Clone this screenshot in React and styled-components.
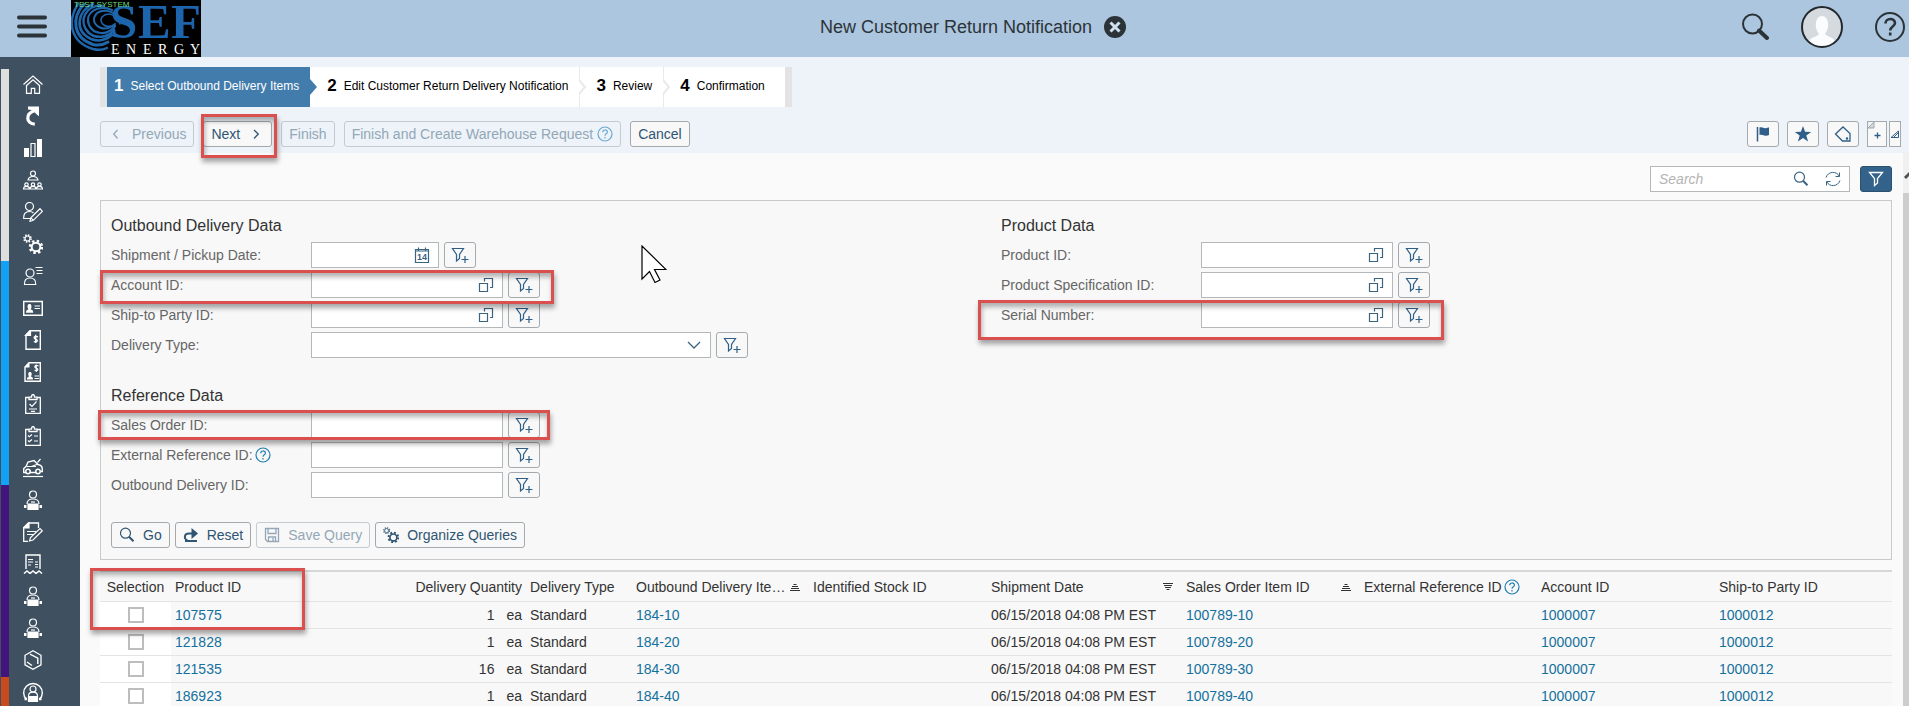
import React, { useState } from "react";
import styled, { createGlobalStyle, css } from "styled-components";

const GlobalStyle = createGlobalStyle`
  * {
    box-sizing: border-box;
  }

  body {
    margin: 0;
    overflow: hidden;
    background: #fafafa;
    color: #333;
    font: 14px/20px "Liberation Sans", Arial, sans-serif;
  }

  button,
  input,
  select {
    font: inherit;
  }

  svg {
    display: block;
    flex-shrink: 0;
  }
`;

const Page = styled.div`
  display: flex;
  flex-direction: column;
  height: 100vh;
  overflow: hidden;
`;

const Header = styled.header`
  display: flex;
  align-items: center;
  flex-shrink: 0;
  height: 57px;
  padding: 0 4px 0 17px;
  background: #abc6de;
  color: #2c3338;
`;

const PlainButton = styled.button`
  display: flex;
  align-items: center;
  justify-content: center;
  flex-shrink: 0;
  padding: 0;
  border: 0;
  background: none;
  color: inherit;
`;

const LogoLink = styled.a`
  display: block;
  margin-left: 24px;
`;

const TitleBar = styled.div`
  display: flex;
  flex: 1;
  align-items: center;
  justify-content: center;
  gap: 12px;
  padding: 0 0 4px 4px;
`;

const Title = styled.h1`
  margin: 0;
  font-size: 18px;
  font-weight: normal;
  line-height: 22px;
`;

const HeaderActions = styled.div`
  display: flex;
  align-items: center;
  gap: 32px;
  padding-bottom: 4px;
`;

const Body = styled.div`
  display: flex;
  flex: 1;
  min-height: 0;
`;

const Sidebar = styled.nav`
  flex-shrink: 0;
  width: 80px;
  padding: 12px 0 0 1px;
  overflow: hidden;
  background: #3f5161;
`;

const SideGroup = styled.div`
  border-left: 8px solid ${(props) => props.$color};
`;

const SideLink = styled.a`
  display: flex;
  align-items: center;
  height: 32px;
  padding: 0 0 2px 14px;
  color: #fff;
`;

const Content = styled.main`
  display: flex;
  flex: 1;
  flex-direction: column;
  min-width: 0;
`;

const Band = styled.div`
  display: flex;
  flex-direction: column;
  flex-shrink: 0;
  gap: 14px;
  padding: 10px 8px 6px 20px;
  background: #edf3f8;
`;

const Steps = styled.ol`
  display: flex;
  align-self: flex-start;
  margin: 0;
  padding: 0;
  border: solid #e3e3e3;
  border-width: 0 7px;
  list-style: none;
  background: #fff;
`;

const Step = styled.li`
  display: flex;
  position: relative;
  align-items: center;
  gap: 7px;
  height: 40px;
  padding: 0 11px 2px 17px;
  color: #000;
  font-size: 12px;

  b {
    font-size: 17px;
  }

  &:first-child {
    padding-left: 7px;
  }

  &:last-child {
    padding-right: 20px;
  }

  ${(props) =>
    props.$active &&
    css`
      background: #427cac;
      color: #fff;
    `}
`;

const StepArrow = styled.svg`
  position: absolute;
  z-index: 1;
  top: 0;
  left: 100%;
`;

const Bar = styled.div`
  display: flex;
  align-items: center;
  justify-content: space-between;
`;

const Group = styled.div`
  display: flex;
  gap: ${(props) => props.$gap}px;
`;

const Anchor = styled.div`
  display: flex;
  position: relative;
`;

const Button = styled.button`
  display: flex;
  align-items: center;
  gap: ${(props) => props.$gap ?? 8}px;
  height: 26px;
  padding: 0 7px;
  border: 1px solid #a3a9ad;
  border-radius: 3px;
  background: #f8f8f8;
  color: #2f5573;
  white-space: nowrap;

  &:disabled {
    border-color: #c3cad0;
    background: transparent;
    color: #93a7b7;
  }
`;

const IconButton = styled(Button)`
  flex-shrink: 0;
  justify-content: center;
  width: 32px;
  padding: 0;
  background: ${(props) => (props.$filled ? "#33628a" : "#f8f8f8")};
  color: ${(props) => (props.$filled ? "#fff" : "#2f5f88")};
  border-color: ${(props) => (props.$filled ? "#2c5170" : "#a3a9ad")};
`;

const PageButton = styled(IconButton)`
  width: ${(props) => props.$width}px;
  border-radius: 0;
`;

const Callout = styled.span`
  position: absolute;
  z-index: 2;
  inset: ${(props) => props.$inset};
  border: 3px solid #d9504f;
  box-shadow:
    1px 4px 5px rgba(0, 0, 0, 0.35),
    inset 1px 4px 5px rgba(0, 0, 0, 0.3);
  pointer-events: none;
`;

const SelectionCallout = styled(Callout)`
  width: 215px;
  height: 62px;
`;

const Scroller = styled.div`
  display: flex;
  flex: 1;
  min-height: 0;
`;

const ScrollBody = styled.div`
  flex: 1;
  min-width: 0;
  padding: 13px 11px 0 20px;
`;

const ScrollTrack = styled.div`
  flex-shrink: 0;
  width: 6px;
  overflow: hidden;
  background: #f0f0f0;
`;

const ScrollThumb = styled.div`
  height: 100%;
  background: #cdcdcd;
`;

const SearchRow = styled.div`
  display: flex;
  justify-content: flex-end;
  gap: 10px;
  margin-bottom: 8px;
`;

const InputBox = styled.div`
  display: flex;
  align-items: center;
  gap: ${(props) => props.$gap ?? 0}px;
  width: ${(props) => props.$width}px;
  height: 26px;
  padding-right: 8px;
  border: 1px solid #b5b8ba;
  background: #fff;
  color: #3b6481;

  input,
  select {
    flex: 1;
    min-width: 0;
    height: 24px;
    padding: 0 8px;
    border: 0;
    outline: 0;
    background: none;
    appearance: none;
  }

  input::placeholder {
    color: #b4b4b4;
    font-style: italic;
  }
`;

const Panel = styled.form`
  position: relative;
  padding: 15px 10px 11px;
  border: 1px solid #c8cacb;
  background: #f8f8f8;
`;

const Columns = styled.div`
  display: grid;
  grid-template-columns: 1fr 1fr;
  gap: 10px;
`;

const FieldGroup = styled.section`
  display: flex;
  flex-direction: column;
  gap: 4px;

  & + & {
    margin-top: 28px;
  }
`;

const GroupTitle = styled.h2`
  margin: 0 0 2px;
  font-size: 16px;
  font-weight: normal;
  line-height: 20px;
`;

const FieldRow = styled.div`
  display: flex;
  position: relative;
  align-self: flex-start;
  align-items: center;
  gap: 5px;
`;

const FieldLabel = styled.div`
  display: flex;
  align-items: center;
  gap: 2px;
  width: 195px;
  color: #666;
`;

const PanelFooter = styled.div`
  display: flex;
  gap: 5px;
  margin-top: 24px;
`;

const Pointer = styled.svg`
  position: absolute;
  top: 44px;
  left: 540px;
`;

const TableWrap = styled.div`
  position: relative;
  margin-top: 10px;
`;

const Table = styled.table`
  width: 100%;
  border-top: 2px solid #d6d8d8;
  border-spacing: 0;
  table-layout: fixed;
  background: #f8f8f8;

  th,
  td {
    height: 27px;
    padding: 0 4px;
    border-bottom: 1px solid #e4e4e4;
    font-weight: normal;
    text-align: left;
    white-space: nowrap;
  }

  th {
    height: 30px;
  }
`;

const HeadCell = styled.div`
  display: flex;
  align-items: center;
  justify-content: ${(props) =>
    props.$align === "right"
      ? "flex-end"
      : props.$align === "center"
        ? "center"
        : "flex-start"};
  gap: 2px;

  span {
    overflow: hidden;
    text-overflow: ellipsis;
  }
`;

const SortMark = styled.svg`
  margin: 0 5px 0 auto;
`;

const CheckCell = styled.td`
  background: #fff;
`;

const CheckBox = styled.input`
  display: block;
  width: 16px;
  height: 16px;
  margin: 0 auto;
  border: 2px solid #bdbdbd;
  background: #fff;
  appearance: none;

  &:checked {
    background: #427cac;
  }
`;

const QuantityCell = styled.td`
  && {
    text-align: right;
  }
`;

const Unit = styled.span`
  margin-left: 12px;
`;

const Link = styled.a`
  color: #14709c;
  text-decoration: none;
`;

const Icon = ({ size = 16, box = 16, width = 1, children, ...rest }) => (
  <svg
    width={size}
    height={size}
    viewBox={`0 0 ${box} ${box}`}
    fill="none"
    stroke="currentColor"
    strokeWidth={width}
    aria-hidden="true"
    {...rest}
  >
    {children}
  </svg>
);

const worker = (
  <>
    <circle cx="10" cy="4.5" r="3.5" />
    <path d="M4 14c0-3.500 2.500-5 6-5s6 1.500 6 5" />
    <path d="M8 12h4" />
    <path d="M5 14h10v5.500H5z" fill="currentColor" />
    <path d="M1 16.500h2.500M16.500 16.500H19" strokeWidth="3" />
  </>
);

const sideIcons = {
  home: (
    <>
      <path d="M.5 10.500 10 2l9.500 8.500M3 12l7-6.300L17 12" />
      <path d="M3.500 12v7.300h4.800v-5h3.400v5h4.800V12" />
    </>
  ),
  curve: (
    <>
      <path d="M12.500 4.500C7 6 4.500 9 4.800 12.500c.2 3 2.700 5.500 7 5.700" strokeWidth="3.200" />
      <path d="M5 .5h11v9.800l-2.500-2-3.700-4L5 3.500z" fill="currentColor" stroke="none" />
    </>
  ),
  bars: (
    <>
      <path d="M1 10h5v9H1zM14 1h5v18h-5z" fill="currentColor" stroke="none" />
      <path d="M8 5.500h4v13H8z" />
    </>
  ),
  team: (
    <>
      <circle cx="10" cy="3.500" r="2.500" />
      <path d="M5 10c.5-2.500 2-3.500 5-3.500s4.500 1 5 3.500zM.5 19c0-2 1-2.700 2.800-2.700S6.500 17 6.500 19zM7 19c0-2 1-2.700 3-2.700s3 .7 3 2.700zM13.500 19c0-2 1-2.700 3.200-2.700s2.800.7 2.800 2.700z" />
      <circle cx="3.500" cy="14.500" r="1.700" />
      <circle cx="10" cy="14.500" r="1.700" />
      <circle cx="16.500" cy="14.500" r="1.700" />
    </>
  ),
  userEdit: (
    <>
      <circle cx="6.500" cy="4.500" r="4" />
      <path d="M7 16.500H.7C.5 12 2 9.500 6.500 9.500c2 0 3 .5 4 1.500" />
      <path d="m7 19.300.8-3.600 9.200-9 2.300 2.600-9 9zM7.800 15.700l2.500 2.600" />
    </>
  ),
  gears: (
    <>
      <circle cx="4.500" cy="4.500" r="2.500" />
      <circle cx="4.500" cy="4.500" r="3.600" strokeWidth="1.500" strokeDasharray="1.500 1.330" />
      <circle cx="13" cy="13" r="4.300" strokeWidth="2" />
      <circle cx="13" cy="13" r="6" strokeWidth="2.500" strokeDasharray="2.400 2.310" />
    </>
  ),
  contact: (
    <>
      <circle cx="7" cy="7" r="4" />
      <path d="M1.500 18.500C1.200 14 3 12 7 12s6 2 5.700 6.500zM12.500 1.500h7M13.500 4.500h6M13.500 7.500h6" />
    </>
  ),
  idCard: (
    <>
      <path d="M.7 3.500h18.600v13.800H.7z" strokeWidth="1.500" />
      <path d="M3 14.800c0-2.500 1-3 2.500-3.300C3.500 8 5 6 6.500 6s3 2 1.200 5.500c1.500.3 2.500.8 2.500 3.300z" fill="currentColor" stroke="none" />
      <path d="M11.500 8h5.500M11.500 10.500h5.500" />
    </>
  ),
  invoice: (
    <>
      <path d="M7 .7h10.300v18.600H3V5z" strokeWidth="1.400" />
      <path d="M7.500.5v5H2.500z" fill="currentColor" />
      <path d="M15 6.800c-4-1.600-5 1.500-2.500 2.200 3 .8 2.200 4-1.700 2.500M12.700 4.800v8.200" strokeWidth="1.300" />
    </>
  ),
  userInvoice: (
    <>
      <path d="M6 .7h11.300v18.600H2V5z" strokeWidth="1.400" />
      <path d="M6.500.5v5H1.500zM4 17.500c0-2 .5-2.500 2-3-1.500-3-.5-4.500 1-4.500s2.500 1.500 1 4.500c1.500.5 2 1 2 3z" fill="currentColor" stroke="none" />
      <path d="M15.500 4c-4-1.600-4.500 1.200-2.500 2 3 .8 2 3.600-1.500 2.200M13.300 2.500v7.500M11.500 14h4.500M11.500 16.500h4.500" />
    </>
  ),
  clipCheck: (
    <>
      <path d="M6 3.500H2.700v16h14.600v-16H14M6 5.500V3.200h2.500c0-3.600 3-3.600 3 0H14v2.300z" strokeWidth="1.300" />
      <path d="m6.500 10 2.500 2.500 4.500-5M6 15h8M8 17.300h4" />
    </>
  ),
  clipList: (
    <>
      <path d="M6 3.500H2.700v16h14.600v-16H14M6 5.500V3.200h2.500c0-3.600 3-3.600 3 0H14v2.300z" strokeWidth="1.300" />
      <path d="m5 9.500 1.300 1.300L9 8.500M5 14.500l1.300 1.300L9 13.500M11 10h4M11 15h4" />
    </>
  ),
  car: (
    <>
      <path d="M3 14.500H.7v-4L3 8.500l2-4.500 6-1.500 4 4c3 .5 4.300 1.500 4.300 4.500v2.500h-1.600M7 14.500h6" strokeWidth="1.400" />
      <path d="M4 8.500h9M8.500 8.500 15 6M14.500 4.500l3-3.500" />
      <circle cx="5" cy="13.500" r="2.200" strokeWidth="1.500" />
      <circle cx="15" cy="13.500" r="2.200" strokeWidth="1.500" />
      <path d="M0 18.500h20" />
    </>
  ),
  worker,
  note: (
    <>
      <path d="M15.500 6V1H5.500L.7 5.500v13.800H5" strokeWidth="1.300" />
      <path d="M6 .5v5.500H.5z" fill="currentColor" />
      <path d="M4 9.500h9M4 12.500h6M6.500 19l1-3.500 9.500-9 2.300 2.300-9.300 9.200z" />
    </>
  ),
  receipt: (
    <>
      <path d="M3 15V1h14v14" strokeWidth="1.400" />
      <path d="M5 5.500h5M5 8h5M12 8h3M12 10.500h3M5 11h3M12 13h3" />
      <path d="m1 19.500 3-2.500 3 2.500L10 17l3 2.500 3-2.500 3 2.500" strokeWidth="1.500" />
    </>
  ),
  box: (
    <>
      <path d="m10 .8 8 4.500v9.500l-8 4.500-8-4.500V5.300z" strokeWidth="1.300" />
      <path d="m7 4.200 7.800 4V14M4 12l5 3.500" strokeWidth="1.400" />
    </>
  ),
  badge: (
    <>
      <path d="M3.500 17.500a9.300 9.300 0 1 1 13 0" strokeWidth="1.400" />
      <circle cx="10" cy="7" r="3" />
      <path d="M5.500 14c0-2.500 1.500-3.800 4.500-3.800s4.500 1.300 4.500 3.800" />
      <path d="M5.500 14.500h9v5h-9z" fill="currentColor" />
      <path d="M1.500 17h2.500M16 17h2.500" strokeWidth="2.500" />
    </>
  ),
};

const sideGroups = [
  {
    color: "#dedede",
    items: [
      ["home", "Home"],
      ["curve", "Feed"],
      ["bars", "Analytics"],
      ["team", "People"],
      ["userEdit", "Customers"],
      ["gears", "Settings"],
    ],
  },
  {
    color: "#12a1f5",
    items: [
      ["contact", "Contacts"],
      ["idCard", "Accounts"],
      ["invoice", "Invoices"],
      ["userInvoice", "Contracts"],
      ["clipCheck", "Tasks"],
      ["clipList", "Checklists"],
      ["car", "Vehicles"],
    ],
  },
  {
    color: "#42157d",
    items: [
      ["worker", "Service"],
      ["note", "Orders"],
      ["receipt", "Receipts"],
      ["worker", "Outbound"],
      ["worker", "Inbound"],
      ["box", "Products"],
    ],
  },
  { color: "#c94a1c", items: [["badge", "Support"]] },
];

const HelpMark = ({ size = 16, color = "#1f7fae", width = 1.2 }) => (
  <Icon size={size} width={width} color={color}>
    <circle cx="8" cy="8" r="7" />
    <path d="M5.700 6.300C5.700 3.200 10.400 3.300 10.400 6c0 1.900-2.400 1.700-2.400 3.800M8 11v1.500" />
  </Icon>
);

const SearchMark = () => (
  <Icon width={1.2}>
    <circle cx="6.500" cy="6.200" r="5" />
    <path d="m10.200 10 4.300 4.300" strokeWidth="2" />
  </Icon>
);

const FilterAdd = () => (
  <Icon size={18} box={18} width={1.2}>
    <path d="M1.500 2.500h11l-4 6v4l-3 2.500V8.500zM10.500 13.500h7M14 10v7" />
  </Icon>
);

const Chevron = ({ left }) => (
  <Icon width={1.3}>
    <path d={left ? "M9.500 4 5.700 8l3.800 4.500" : "m6 4 4.300 4L6 12.500"} />
  </Icon>
);

const ValueHelp = () => (
  <Icon width={1.2}>
    <path d="M1.500 6.500h8v8h-8zM6.500 4.500V1.500h8v9H12" />
  </Icon>
);

const Calendar = () => (
  <Icon width={1.2}>
    <path d="M1.500 2.500h13v13h-13zM1.500 4h13M4.500.5V4M11.500.5V4" />
    <text
      x="8"
      y="13"
      textAnchor="middle"
      fontSize="9"
      fontWeight="bold"
      fill="currentColor"
      stroke="none"
    >
      14
    </text>
  </Icon>
);

const SortIcon = ({ down }) => (
  <SortMark
    width="10"
    height="8"
    viewBox="0 0 10 8"
    stroke="#333"
    strokeWidth="1"
    aria-hidden="true"
  >
    <path
      d={
        down
          ? "M0 .5h10M1 2.500h8M2 4.500h6M3.500 6.500h3"
          : "M3.500 1.500h3M2 3.500h6M1 5.500h8M0 7.500h10"
      }
    />
  </SortMark>
);

const Logo = () => (
  <svg width="130" height="57" viewBox="0 0 130 57" role="img" aria-label="SEF Energy">
    <path d="M0 0h130v57H0z" fill="#000" />
    <g fill="none" stroke="#1f66ab" strokeLinecap="round">
      <path d="M7 4C-4 21-1 42 22 49c6 1.500 10 1 14-1" strokeWidth="2.500" />
      <path d="M13 4C0 18 2 38 22 44.500c6 1.500 11 0 15-2.500" strokeWidth="3" />
      <path d="M22 4C6 11 3 31 20 39c8 3 15 1 21-4" strokeWidth="2.500" />
      <path d="M32 6C15 4 6 21 18 33c7 6 19 5 25-3" strokeWidth="2.500" />
      <path d="M41 10C28 4 13 12 18 25c4 9 18 12 26 1" strokeWidth="2.200" />
      <path d="M47 17C40 9 26 8 23 18c-1 9 11 15 21 6" strokeWidth="2" />
      <path d="M49 24C46 15 37 11 31 17c-3 5 2 11 9 9" strokeWidth="1.500" />
    </g>
    <g fontFamily="Liberation Serif, serif">
      <text x="39 67 100" y="38" fontSize="49" fontWeight="bold" fill="#1c64ac">
        SEF
      </text>
      <text x="40 55 72 87 103 119" y="54" fontSize="14" fill="#fff">
        ENERGY
      </text>
    </g>
    <text x="3" y="7" fontSize="8" fill="#6fdc7c">
      TEST SYSTEM
    </text>
  </svg>
);

const steps = [
  "Select Outbound Delivery Items",
  "Edit Customer Return Delivery Notification",
  "Review",
  "Confirmation",
];

const Wizard = () => (
  <Steps>
    {steps.map((step, i) => (
      <Step key={step} $active={i === 0} aria-current={i === 0 ? "step" : undefined}>
        <b>{i + 1}</b>
        {step}
        {i < steps.length - 1 && (
          <StepArrow width="8" height="40" viewBox="0 0 8 40" aria-hidden="true">
            {i === 0 ? (
              <path d="M0 12 7 20 0 28z" fill="#427cac" />
            ) : (
              <path d="M0 0v13l6 7-6 7v13" fill="none" stroke="#e6eaed" strokeWidth="2" />
            )}
          </StepArrow>
        )}
      </Step>
    ))}
  </Steps>
);

const adornments = {
  date: <Calendar />,
  lookup: <ValueHelp />,
};

const Field = ({ id, label, type, help, callout }) => (
  <FieldRow>
    <FieldLabel>
      <label htmlFor={id}>{label}:</label>
      {help && <HelpMark />}
    </FieldLabel>
    {type === "select" ? (
      <InputBox $width={400}>
        <select id={id}>
          <option value="" />
          <option value="standard">Standard</option>
        </select>
        <Icon width={1.3}>
          <path d="m2 5 6 6 6-6" />
        </Icon>
      </InputBox>
    ) : (
      <InputBox $width={type === "date" ? 128 : 192}>
        <input id={id} type="text" />
        {adornments[type] && (
          <PlainButton type="button" aria-label={`Choose ${label}`}>
            {adornments[type]}
          </PlainButton>
        )}
      </InputBox>
    )}
    <IconButton type="button" aria-label={`Add filter for ${label}`}>
      <FilterAdd />
    </IconButton>
    {callout && <Callout $inset={callout} />}
  </FieldRow>
);

const FilterPanel = () => (
  <Panel onSubmit={(e) => e.preventDefault()}>
    <Columns>
      <div>
        <FieldGroup>
          <GroupTitle>Outbound Delivery Data</GroupTitle>
          <Field id="pickup-date" label="Shipment / Pickup Date" type="date" />
          <Field
            id="account-id"
            label="Account ID"
            type="lookup"
            callout="-2px -14px -6px -11px"
          />
          <Field id="ship-to" label="Ship-to Party ID" type="lookup" />
          <Field id="delivery-type" label="Delivery Type" type="select" />
        </FieldGroup>
        <FieldGroup>
          <GroupTitle>Reference Data</GroupTitle>
          <Field
            id="sales-order"
            label="Sales Order ID"
            callout="-2px -10px -2px -13px"
          />
          <Field id="external-ref" label="External Reference ID" help />
          <Field id="outbound-id" label="Outbound Delivery ID" />
        </FieldGroup>
      </div>
      <div>
        <FieldGroup>
          <GroupTitle>Product Data</GroupTitle>
          <Field id="product-id" label="Product ID" type="lookup" />
          <Field id="product-spec" label="Product Specification ID" type="lookup" />
          <Field
            id="serial"
            label="Serial Number"
            type="lookup"
            callout="-2px -14px -12px -23px"
          />
        </FieldGroup>
      </div>
    </Columns>
    <PanelFooter>
      <Button type="submit">
        <SearchMark />
        Go
      </Button>
      <Button type="reset">
        <Icon width={2}>
          <path d="M2 14h12M11 6.500H6C.5 6.500 1 13 4.500 13" />
          <path d="m8.500 1 6.500 5.500L8.500 12z" fill="currentColor" stroke="none" />
        </Icon>
        Reset
      </Button>
      <Button type="button" disabled>
        <Icon width={1.3}>
          <path d="M1.500 1.500h13v13h-11l-2-2zM4 1.500v5h8v-5M4.500 14.500v-4.500h7v4.500M9 11v3" />
        </Icon>
        Save Query
      </Button>
      <Button type="button">
        <Icon box={20}>{sideIcons.gears}</Icon>
        Organize Queries
      </Button>
    </PanelFooter>
    <Pointer width="26" height="40" viewBox="0 0 26 40" aria-hidden="true">
      <path
        d="M1 1v33l7.500-7.500 5.500 11 5-2.500-5.500-10.500H25z"
        fill="#fff"
        stroke="#000"
        strokeWidth="1.200"
      />
    </Pointer>
  </Panel>
);

const columns = [
  { label: "Selection", width: 71, align: "center" },
  { label: "Product ID", width: 177 },
  { label: "Delivery Quantity", width: 178, align: "right" },
  { label: "Delivery Type", width: 106 },
  { label: "Outbound Delivery Item ID", width: 177, sort: "up" },
  { label: "Identified Stock ID", width: 178 },
  { label: "Shipment Date", width: 195, sort: "down" },
  { label: "Sales Order Item ID", width: 178, sort: "up" },
  { label: "External Reference ID", width: 177, help: true },
  { label: "Account ID", width: 178 },
  { label: "Ship-to Party ID", width: 177 },
];

const rows = [
  { product: "107575", quantity: 1, item: 10 },
  { product: "121828", quantity: 1, item: 20 },
  { product: "121535", quantity: 16, item: 30 },
  { product: "186923", quantity: 1, item: 40 },
];

const ItemsTable = () => {
  const [selected, setSelected] = useState([]);
  const toggle = (product) =>
    setSelected((current) =>
      current.includes(product)
        ? current.filter((p) => p !== product)
        : [...current, product]
    );

  return (
    <TableWrap>
      <Table>
        <colgroup>
          {columns.map((column) => (
            <col key={column.label} width={column.width} />
          ))}
        </colgroup>
        <thead>
          <tr>
            {columns.map((column) => (
              <th key={column.label} scope="col">
                <HeadCell $align={column.align}>
                  <span>{column.label}</span>
                  {column.help && <HelpMark />}
                  {column.sort && <SortIcon down={column.sort === "down"} />}
                </HeadCell>
              </th>
            ))}
          </tr>
        </thead>
        <tbody>
          {rows.map((row) => (
            <tr key={row.product}>
              <CheckCell>
                <CheckBox
                  type="checkbox"
                  aria-label={`Select ${row.product}`}
                  checked={selected.includes(row.product)}
                  onChange={() => toggle(row.product)}
                />
              </CheckCell>
              <td>
                <Link href="#product">{row.product}</Link>
              </td>
              <QuantityCell>
                {row.quantity}
                <Unit>ea</Unit>
              </QuantityCell>
              <td>Standard</td>
              <td>
                <Link href="#delivery">184-{row.item}</Link>
              </td>
              <td />
              <td>06/15/2018 04:08 PM EST</td>
              <td>
                <Link href="#order">100789-{row.item}</Link>
              </td>
              <td />
              <td>
                <Link href="#account">1000007</Link>
              </td>
              <td>
                <Link href="#party">1000012</Link>
              </td>
            </tr>
          ))}
        </tbody>
      </Table>
      <SelectionCallout $inset="-2px auto auto -10px" />
    </TableWrap>
  );
};

const App = () => (
  <Page>
    <GlobalStyle />
    <Header>
      <PlainButton aria-label="Menu">
        <Icon size={30} box={30} width={4} strokeLinecap="round">
          <path d="M2 3.500h26M2 12.500h26M2 21.500h26" />
        </Icon>
      </PlainButton>
      <LogoLink href="#home">
        <Logo />
      </LogoLink>
      <TitleBar>
        <Title>New Customer Return Notification</Title>
        <PlainButton aria-label="Close">
          <Icon size={22} box={22} width={3}>
            <circle cx="11" cy="11" r="11" fill="#2c3338" stroke="none" />
            <path d="m6.500 6.500 9 9M15.500 6.500l-9 9" stroke="#cfe0ee" />
          </Icon>
        </PlainButton>
      </TitleBar>
      <HeaderActions>
        <PlainButton aria-label="Search">
          <Icon size={28} box={28} width={2}>
            <circle cx="11.500" cy="11" r="9.500" />
            <path d="m18 17.500 8 7.500" strokeWidth="4" strokeLinecap="round" />
          </Icon>
        </PlainButton>
        <PlainButton aria-label="Profile">
          <svg width="42" height="42" viewBox="0 0 42 42" aria-hidden="true">
            <circle cx="21" cy="21" r="20" fill="#d5dadf" />
            <path
              d="M8 36c1-5 8-5 10-8-5-6-4-18 3-18s8 12 3 18c2 3 9 3 10 8-7 6-19 6-26 0z"
              fill="#fafcfd"
            />
            <circle cx="21" cy="21" r="20" fill="none" stroke="#22282c" strokeWidth="2" />
          </svg>
        </PlainButton>
        <PlainButton aria-label="Help">
          <Icon size={30} box={30} width={2}>
            <circle cx="15" cy="15" r="14" />
            <path
              d="M10.500 11.500C10.500 5.500 20 5.500 20 11c0 3.700-4.800 3.300-4.800 7.500M15.200 20.500v3"
              strokeWidth="2.600"
            />
          </Icon>
        </PlainButton>
      </HeaderActions>
    </Header>
    <Body>
      <Sidebar aria-label="Main">
        {sideGroups.map((group) => (
          <SideGroup key={group.color} $color={group.color}>
            {group.items.map(([icon, label]) => (
              <SideLink key={label} href={`#${label}`} aria-label={label}>
                <Icon size={20} box={20} width={1.2}>
                  {sideIcons[icon]}
                </Icon>
              </SideLink>
            ))}
          </SideGroup>
        ))}
      </Sidebar>
      <Content>
        <Band>
          <Wizard />
          <Bar>
            <Group $gap={9}>
              <Button disabled>
                <Chevron left />
                Previous
              </Button>
              <Anchor>
                <Button>
                  Next
                  <Chevron />
                </Button>
                <Callout $inset="-7px -5px -11px -2px" />
              </Anchor>
              <Button disabled>Finish</Button>
              <Button disabled $gap={4}>
                Finish and Create Warehouse Request
                <HelpMark color="#6aa9cf" />
              </Button>
              <Button>Cancel</Button>
            </Group>
            <Group $gap={8}>
              <IconButton aria-label="Flag">
                <Icon>
                  <path d="M2.500 1v14.500" strokeWidth="1.500" />
                  <path
                    d="M4.500 1.500c3-1 4 1 6 .7 1.500-.2 2.500-.7 3.500-.7v7.500c-1 .5-2 .8-3.500.8-2 0-3-1.500-6-.8z"
                    fill="currentColor"
                    stroke="none"
                  />
                </Icon>
              </IconButton>
              <IconButton aria-label="Favorite">
                <Icon size={18} box={18}>
                  <path
                    d="m9 1 2.100 5.700 6.100.2-4.900 3.700 1.800 5.900L9 13l-5.100 3.500 1.800-5.900L.8 6.900l6.100-.2z"
                    fill="currentColor"
                    stroke="none"
                  />
                </Icon>
              </IconButton>
              <IconButton aria-label="Tag">
                <Icon size={18} box={18} width={1.3}>
                  <path d="M1.500 9 9 2l7 6.500v7.500H8.500z" />
                  <circle cx="13" cy="13.500" r=".6" />
                </Icon>
              </IconButton>
              <Group $gap={2}>
                <PageButton $width={20} aria-label="New note">
                  <svg width="18" height="24" viewBox="0 0 18 24" aria-hidden="true">
                    <path d="M-1-1h7l-7 7z" fill="#edf3f8" />
                    <path d="M0 6 6 0v6z" fill="#d5d8da" stroke="#a3a9ad" />
                    <path d="M6.500 13.500h6M9.500 10.500v6" stroke="#2f5f88" strokeWidth="1.300" />
                  </svg>
                </PageButton>
                <PageButton $width={12} aria-label="Resize">
                  <Icon size={8} box={8}>
                    <path d="M0 7.500h7.500V1zM3 7l4-4" />
                  </Icon>
                </PageButton>
              </Group>
            </Group>
          </Bar>
        </Band>
        <Scroller>
          <ScrollBody>
            <SearchRow>
              <InputBox $width={200} $gap={16}>
                <input type="search" placeholder="Search" aria-label="Search" />
                <SearchMark />
                <Icon>
                  <path d="M1 6.500C3 0 12 0 14 5M15 9.500C13 16 4 16 2 11M14.500 1.500V5.500h-4M1.500 14.500v-4h4" />
                </Icon>
              </InputBox>
              <IconButton $filled aria-label="Filter">
                <Icon width={1.3}>
                  <path d="M1.500 1.500h13l-5 6v4.500L6.500 14.500v-7z" />
                </Icon>
              </IconButton>
            </SearchRow>
            <FilterPanel />
            <ItemsTable />
          </ScrollBody>
          <ScrollTrack>
            <svg width="10" height="40" viewBox="0 0 10 40" aria-hidden="true">
              <path d="m2 25 6-6" stroke="#505050" strokeWidth="3" />
            </svg>
            <ScrollThumb />
          </ScrollTrack>
        </Scroller>
      </Content>
    </Body>
  </Page>
);

export default App;
